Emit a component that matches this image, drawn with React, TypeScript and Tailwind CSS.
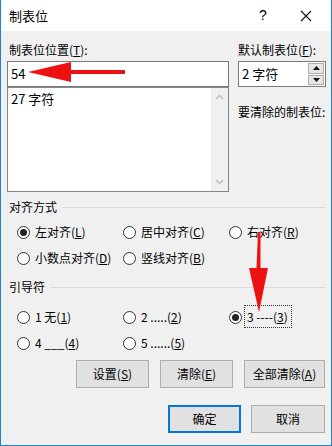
import React from "react";

const font = { fontFamily: '"Noto Sans CJK SC", "Noto Sans", sans-serif' };

function U({ children }: { children: React.ReactNode }) {
  return <span className="underline underline-offset-[1px]">{children}</span>;
}

function Radio({ checked, children, w }: { checked?: boolean; children: React.ReactNode; w: string }) {
  return (
    <div className={`flex items-center gap-[5px] h-[26px] ${w}`}>
      <div className="w-[13px] h-[13px] rounded-full border border-[#333] bg-white flex items-center justify-center shrink-0">
        {checked && <div className="w-[7px] h-[7px] rounded-full bg-[#222]" />}
      </div>
      <div className="leading-[16px] whitespace-nowrap">{children}</div>
    </div>
  );
}

function GroupLabel({ text }: { text: string }) {
  return (
    <div className="flex items-center h-[16px] gap-[5px]">
      <span className="leading-[16px]">{text}</span>
      <div className="flex-1 h-px bg-[#dcdcdc]" />
    </div>
  );
}

function Btn({ children, w, primary }: { children: React.ReactNode; w: string; primary?: boolean }) {
  return (
    <div
      className={`${w} h-[28px] flex items-center justify-center bg-[#e1e1e1] ${
        primary ? "border-2 border-[#0078d7]" : "border border-[#adadad]"
      }`}
    >
      {children}
    </div>
  );
}

export default function App() {
  return (
    <div style={font} className="relative w-[332px] h-[446px] bg-[#f0f0f0] border-l border-r border-b border-[#1883d7] text-[12px] text-black overflow-hidden">
      {/* title bar */}
      <div className="h-[31px] bg-white flex items-center pl-[8px]">
        <span className="text-[13px] leading-[16px]">制表位</span>
        <div className="flex-1" />
        <span className="text-[14px] w-[20px] text-center mr-[27px]" style={{ fontFamily: '"Liberation Sans", sans-serif' }}>?</span>
        <svg width="12" height="12" viewBox="0 0 12 12" className="mr-[19px]">
          <path d="M1 1 L11 11 M11 1 L1 11" stroke="#111" strokeWidth="1.1" />
        </svg>
      </div>

      <div className="pl-[6px] pr-[5px] pt-[11px]">
        {/* top row */}
        <div className="flex gap-[9px]">
          <div className="w-[222px] flex flex-col">
            <div className="leading-[16px] h-[16px] pl-[2px]">
              制表位位置(<U>T</U>):
            </div>
            <div className="mt-[3px] h-[26px] bg-white border border-[#7a7a7a] flex items-center pl-[3px] text-[13px]">
              54
            </div>
            <div className="h-[105px] bg-white border border-[#828790] flex">
              <div className="flex-1 pl-[3px] pt-[2px] text-[13px] leading-[18px]">27 字符</div>
              <div className="w-[17px] bg-[#f0f0f0] flex flex-col items-center justify-between py-[6px]">
                <svg width="9" height="6" viewBox="0 0 9 6"><path d="M1 5 L4.5 1.5 L8 5" stroke="#c2c2c2" strokeWidth="1.6" fill="none" /></svg>
                <svg width="9" height="6" viewBox="0 0 9 6"><path d="M1 1 L4.5 4.5 L8 1" stroke="#c2c2c2" strokeWidth="1.6" fill="none" /></svg>
              </div>
            </div>
          </div>
          <div className="w-[88px] flex flex-col">
            <div className="leading-[16px] h-[16px] whitespace-nowrap">
              默认制表位(<U>F</U>):
            </div>
            <div className="mt-[3px] h-[26px] bg-white border border-[#7a7a7a] flex items-center">
              <span className="flex-1 pl-[3px] text-[13px]">2 字符</span>
              <div className="w-[16px] h-[22px] flex flex-col gap-px mr-px">
                <div className="flex-1 bg-[#e6e6e6] border border-[#adadad] flex items-center justify-center">
                  <svg width="7" height="4" viewBox="0 0 7 4"><path d="M0 4 L3.5 0 L7 4Z" fill="#111" /></svg>
                </div>
                <div className="flex-1 bg-[#e6e6e6] border border-[#adadad] flex items-center justify-center">
                  <svg width="7" height="4" viewBox="0 0 7 4"><path d="M0 0 L3.5 4 L7 0Z" fill="#111" /></svg>
                </div>
              </div>
            </div>
            <div className="mt-[17px] leading-[16px] whitespace-nowrap">要清除的制表位:</div>
          </div>
        </div>

        {/* alignment */}
        <div className="mt-[7px] pl-[2px]">
          <GroupLabel text="对齐方式" />
          <div className="pl-[8px] mt-[4px]">
            <div className="flex">
              <Radio checked w="w-[106px]">左对齐(<U>L</U>)</Radio>
              <Radio w="w-[106px]">居中对齐(<U>C</U>)</Radio>
              <Radio w="w-[90px]">右对齐(<U>R</U>)</Radio>
            </div>
            <div className="flex">
              <Radio w="w-[106px]">小数点对齐(<U>D</U>)</Radio>
              <Radio w="w-[106px]">竖线对齐(<U>B</U>)</Radio>
            </div>
          </div>
        </div>

        {/* leader */}
        <div className="mt-[8px] pl-[2px]">
          <GroupLabel text="引导符" />
          <div className="pl-[8px] mt-[9px]">
            <div className="flex">
              <Radio w="w-[106px]">1 无(<U>1</U>)</Radio>
              <Radio w="w-[106px]">2 .....(<U>2</U>)</Radio>
              <Radio checked w="w-[90px]">
                <span className="outline outline-1 outline-dotted outline-[#333] outline-offset-[2px] pr-[1px]">
                  3 ----(<U>3</U>)
                </span>
              </Radio>
            </div>
            <div className="flex">
              <Radio w="w-[106px]">4 ___(<U>4</U>)</Radio>
              <Radio w="w-[106px]">5 ......(<U>5</U>)</Radio>
            </div>
          </div>
        </div>

        {/* buttons */}
        <div className="mt-[4px] flex justify-end gap-[11px] pr-[1px]">
          <Btn w="w-[73px]">设置(<U>S</U>)</Btn>
          <Btn w="w-[73px]">清除(<U>E</U>)</Btn>
          <Btn w="w-[81px]">全部清除(<U>A</U>)</Btn>
        </div>
        <div className="mt-[17px] flex justify-end gap-[10px] pr-[1px]">
          <Btn w="w-[73px]" primary>确定</Btn>
          <Btn w="w-[74px]">取消</Btn>
        </div>
      </div>

      {/* red arrows overlay */}
      <svg className="absolute left-0 top-0 pointer-events-none" width="332" height="446">
        <path d="M27 72 L70 62 L70 70 L124 70 L124 74 L70 74 L70 82 Z" fill="#ee1111" />
        <path d="M257 232 L259.5 232 L259.5 268 L267 268 L258 312 L248 268 L255.5 268 Z" fill="#ee1111" />
      </svg>
    </div>
  );
}
